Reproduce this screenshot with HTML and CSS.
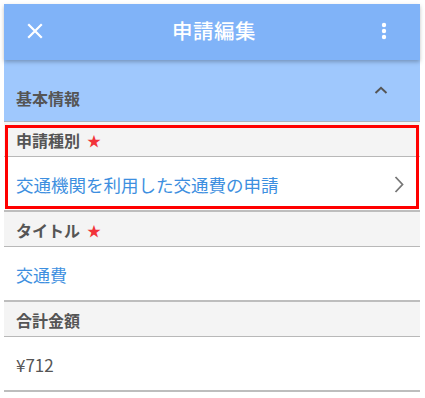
FILE: index.html
```html
<!DOCTYPE html>
<html lang="ja">
<head>
  <meta charset="UTF-8">
  <meta name="viewport" content="width=device-width, initial-scale=1.0">
  <title>申請編集</title>
  <link rel="stylesheet" href="styles.css">
</head>
<body>
  <div class="screen">
    <header class="topbar">
      <svg class="icon-close" width="16" height="16" viewBox="0 0 16 16">
        <path d="M2 2 L14 14 M14 2 L2 14" stroke="#fff" stroke-width="2.2" stroke-linecap="square"/>
      </svg>
      <h1 class="title">申請編集</h1>
      <svg class="icon-more" width="6" height="18" viewBox="0 0 6 18">
        <circle cx="3" cy="3" r="2.2" fill="#fff"/>
        <circle cx="3" cy="9" r="2.2" fill="#fff"/>
        <circle cx="3" cy="15" r="2.2" fill="#fff"/>
      </svg>
    </header>

    <!-- 基本情報 -->
    <div class="section-head">
      <span class="section-title">基本情報</span>
      <svg class="icon-up" width="14" height="8" viewBox="0 0 14 8">
        <path d="M1.5 7 L7 1.8 L12.5 7" fill="none" stroke="#555" stroke-width="2"/>
      </svg>
    </div>

    <div class="field selected">
      <div class="field-label">申請種別 <span class="req">★</span></div>
      <div class="field-value link">
        <span>交通機関を利用した交通費の申請</span>
        <svg class="icon-next" width="10" height="17" viewBox="0 0 10 17">
          <path d="M1.5 1 L8.5 8.5 L1.5 16" fill="none" stroke="#777" stroke-width="1.8"/>
        </svg>
      </div>
    </div>

    <div class="field">
      <div class="field-label">タイトル <span class="req">★</span></div>
      <div class="field-value link">交通費</div>
    </div>

    <div class="field">
      <div class="field-label">合計金額</div>
      <div class="field-value">¥712</div>
    </div>
  </div>
</body>
</html>
```

FILE: styles.css
```css
body {
  margin: 0;
  background: #fff;
  font-family: "Noto Sans CJK JP", "Noto Sans", sans-serif;
  color: #555;
}
.screen {
  margin: 4px 5px 0 4px;
  width: 416px;
}
.topbar {
  position: relative;
  z-index: 1;
  height: 56px;
  background: #80b3f8;
  display: flex;
  align-items: center;
  padding: 0 0 4px 0;
  box-sizing: border-box;
  box-shadow: 0 2px 4px rgba(0,0,0,0.25);
}
.icon-close {
  margin-left: 23px;
  margin-top: 2px;
}
.title {
  flex: 1;
  margin: 0;
  text-align: center;
  color: #fff;
  font-size: 20.5px;
  font-weight: 500;
  letter-spacing: 0.5px;
  padding-left: 4px;
}
.icon-more {
  margin-right: 33px;
  margin-top: 2px;
}
.section-head {
  height: 62px;
  box-sizing: border-box;
  background: #9fc8fd;
  border-bottom: 1px solid #a9b4c2;
  display: flex;
  align-items: center;
  padding: 0 32px 0 12px;
}
.section-title {
  flex: 1;
  font-size: 16px;
  font-weight: bold;
  color: #555;
  padding-top: 14px;
}
.icon-up {
  margin-bottom: 1px;
}
.field {
  position: relative;
}
.field-label {
  height: 35px;
  box-sizing: border-box;
  background: #f4f4f4;
  border-bottom: 1px solid #b8b8b8;
  display: flex;
  align-items: center;
  padding: 2px 12px 0;
  font-size: 16px;
  font-weight: bold;
  color: #555;
}
.req {
  color: #f2333a;
  font-size: 14px;
  margin-left: 7px;
}
.field-value {
  height: 55px;
  box-sizing: border-box;
  border-bottom: 2px solid #bdbdbd;
  display: flex;
  align-items: center;
  justify-content: space-between;
  padding: 2px 16px 0 12px;
  font-size: 17px;
  color: #555;
}
.field-value.link {
  color: #3d8fe0;
}
.selected .field-value {
  font-size: 17.5px;
}
.icon-next {
  margin-top: -1px;
}
.selected::after {
  content: "";
  position: absolute;
  top: 3px;
  left: 1px;
  right: 1px;
  bottom: 3px;
  border: 3px solid #f00;
}
```
